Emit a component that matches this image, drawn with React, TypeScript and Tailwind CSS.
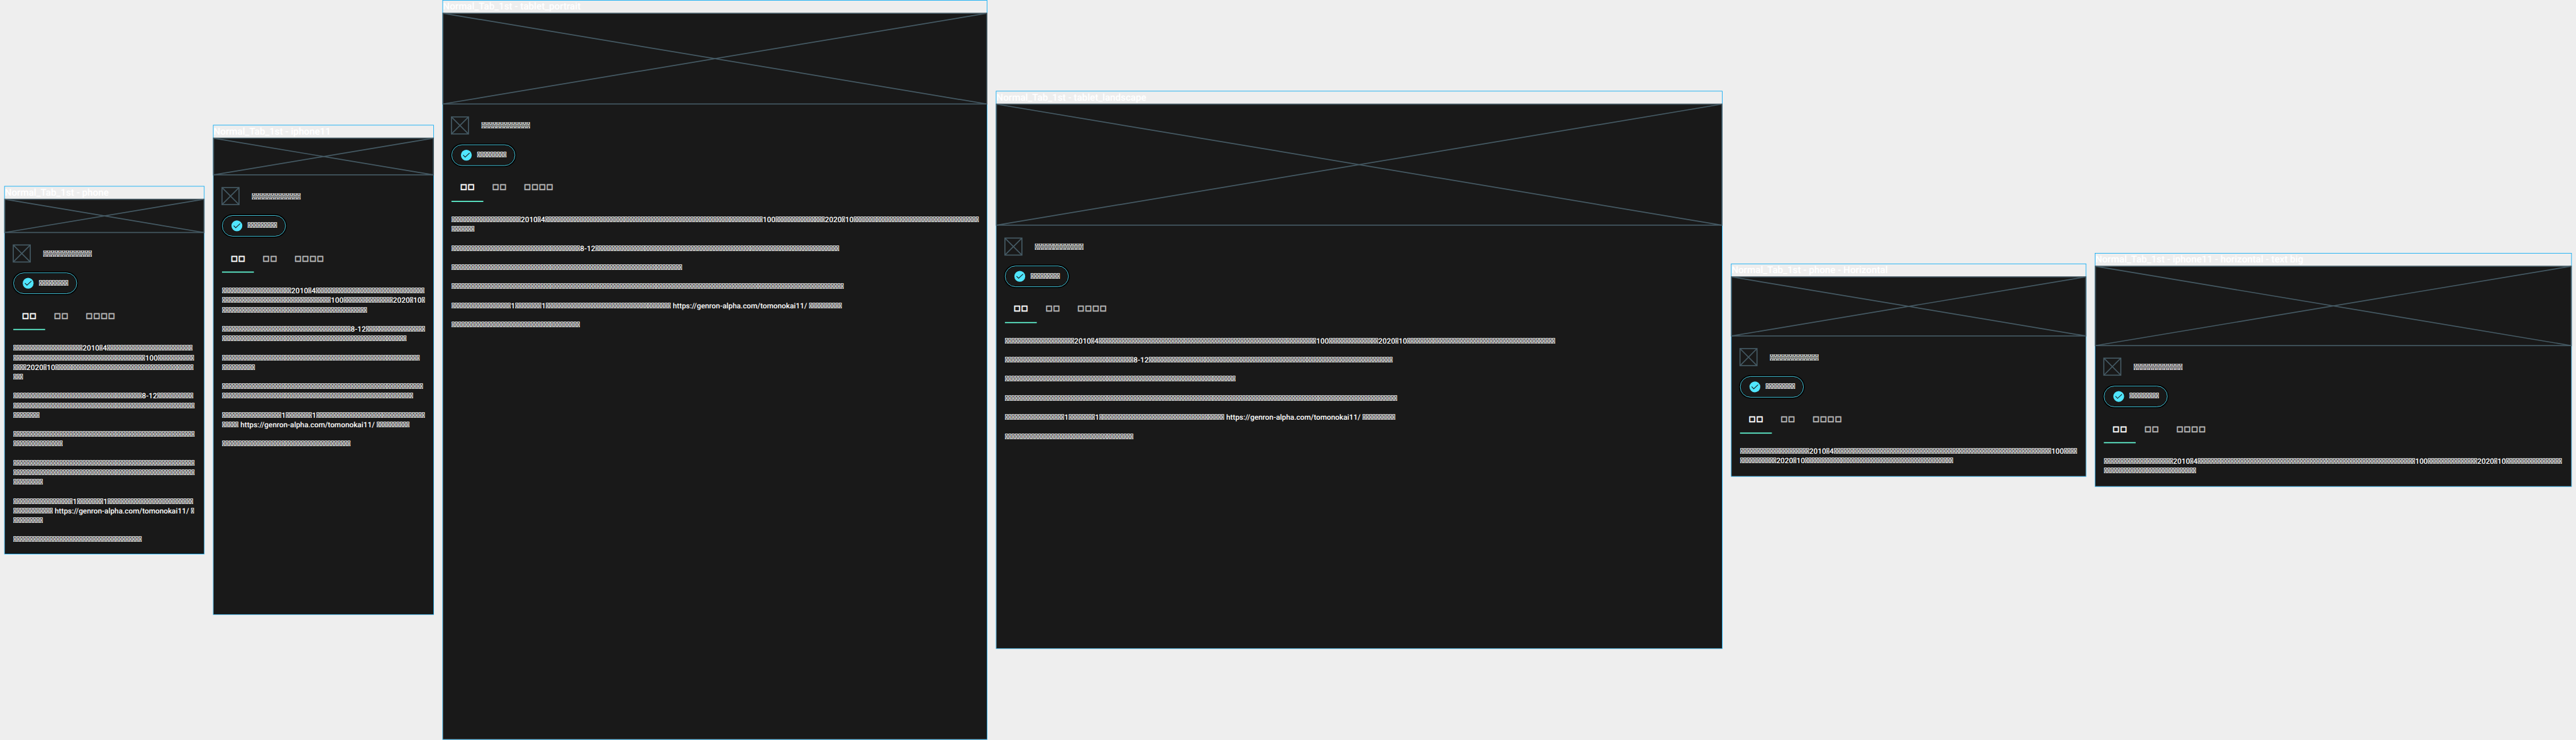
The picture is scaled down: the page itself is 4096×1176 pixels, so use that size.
type Piece = number | string;
type Line = Piece[];

interface Frame {
  name: string;
  size: string;
  banner: string;
  paragraphs: Line[][];
}

const URL_TEXT = " https://genron-alpha.com/tomonokai11/ ";

const introLine: Line = [21, "2010", 1, "4", 66, "100", 15, "2020", 1, "10"];

const wideTail: Line[][] = [
  [[39, "8-12", 74]],
  [[70]],
  [[119]],
  [[18, "1", 8, "1", 38, URL_TEXT, 10]],
  [[39]],
];

const frames: Frame[] = [
  {
    name: "Normal_Tab_1st - phone",
    size: "w-[375px] h-[667px]",
    banner: "h-[62.5px]",
    paragraphs: [
      [[21, "2010", 1, "4", 26], [40, "100", 11], [4, "2020", 1, "10", 42], [3]],
      [[39, "8-12", 11], [55], [8]],
      [[55], [15]],
      [[55], [55], [9]],
      [[18, "1", 8, "1", 26], [12, URL_TEXT, 1], [9]],
      [[39]],
    ],
  },
  {
    name: "Normal_Tab_1st - iphone11",
    size: "w-[414px] h-[896px]",
    banner: "h-[69px]",
    paragraphs: [
      [[21, "2010", 1, "4", 33], [33, "100", 15, "2020", 1, "10", 1], [44]],
      [[39, "8-12", 18], [56]],
      [[60], [10]],
      [[61], [58]],
      [[18, "1", 8, "1", 33], [5, URL_TEXT, 10]],
      [[39]],
    ],
  },
  {
    name: "Normal_Tab_1st - tablet_portrait",
    size: "w-[1024px] h-[1366px]",
    banner: "h-[170.67px]",
    paragraphs: [[[...introLine, 38], [7]], ...wideTail],
  },
  {
    name: "Normal_Tab_1st - tablet_landscape",
    size: "w-[1366px] h-[1024px]",
    banner: "h-[227.67px]",
    paragraphs: [[[...introLine, 45]], ...wideTail],
  },
  {
    name: "Normal_Tab_1st - phone - Horizontal",
    size: "w-[667px] h-[375px]",
    banner: "h-[111.17px]",
    paragraphs: [[[21, "2010", 1, "4", 66, "100", 4], [11, "2020", 1, "10", 45]]],
  },
  {
    name: "Normal_Tab_1st - iphone11 - horizontal - text big",
    size: "w-[896px] h-[414px]",
    banner: "h-[149.33px]",
    paragraphs: [[[...introLine, 17], [28]]],
  },
];

// Characters the typeface has no glyph for; they show as its placeholder box.
function Missing({ count }: { count: number }) {
  return <span className="[-webkit-text-stroke:0.25px_currentColor]">{"\uE000".repeat(count)}</span>;
}

function CrossedBox({ className }: { className: string }) {
  return (
    <svg className={`block shrink-0 overflow-visible text-[#455a64] ${className}`} stroke="currentColor" fill="none">
      <rect width="100%" height="100%" strokeWidth="2" />
      <line x1="0" y1="0" x2="100%" y2="100%" strokeWidth="2" />
      <line x1="0" y1="100%" x2="100%" y2="0" strokeWidth="2" />
    </svg>
  );
}

function CheckIcon() {
  return (
    <svg className="size-6 shrink-0" viewBox="0 0 24 24" fill="none">
      <circle cx="12" cy="12" r="10.2" fill="#50e6ff" />
      <path d="M5.9 11.6L9.8 15.6L18.1 7.9" stroke="#191919" strokeWidth="1.3" />
    </svg>
  );
}

function Tab({ label, active = false }: { label: string; active?: boolean }) {
  return (
    <div
      className={`h-12 border-b-2 px-4 pt-[9.6px] text-[15px] leading-6 ${
        active ? "border-[#64ffda] text-white" : "border-transparent text-[#b9b9b9]"
      }`}
    >
      <span className="flex font-['Inter',sans-serif] font-bold [-webkit-text-stroke:0.3px_currentColor]">
        {label.split("").map((glyph, i) => (
          <span key={i} className="flex w-[14px] justify-center">
            {glyph}
          </span>
        ))}
      </span>
    </div>
  );
}

function Device({ frame }: { frame: Frame }) {
  return (
    <section className="shrink-0 border border-[#03a9f4]">
      <h2 className="h-6 whitespace-nowrap text-[18px] leading-[23px] text-white">{frame.name}</h2>
      <div className={`bg-[#191919] text-white ${frame.size}`}>
        <CrossedBox className={`w-full ${frame.banner}`} />
        <div className="px-4 pt-6">
          <div className="flex items-center gap-6">
            <CrossedBox className="size-8" />
            <span className="pt-[2px] text-base leading-6">
              <Missing count={13} />
            </span>
          </div>
          <button className="mt-5 flex h-10 w-[120px] items-center gap-2 rounded-full border border-[#50e6ff] pl-[15px] text-sm leading-5 shadow-[0_0_0_2px_#000,inset_0_0_0_1px_#000]">
            <CheckIcon />
            <span className="pb-[2px]">
              <Missing count={9} />
            </span>
          </button>
          <div className="mt-5 flex">
            <Tab label="□□" active />
            <Tab label="□□" />
            <Tab label="□□□□" />
          </div>
          <div className="flex flex-col gap-[18px] whitespace-pre pt-[25.7px] text-sm leading-[18px]">
            {frame.paragraphs.map((lines, i) => (
              <p key={i}>
                {lines.map((line, j) => (
                  <span key={j} className="block">
                    {line.map((piece, k) => (typeof piece === "number" ? <Missing key={k} count={piece} /> : piece))}
                  </span>
                ))}
              </p>
            ))}
          </div>
        </div>
      </div>
    </section>
  );
}

export default function App() {
  return (
    <div className="h-[1176px] w-[4096px] overflow-hidden bg-[#eeeeee]">
      <main className="flex h-[1392px] w-[4850px] origin-top-left scale-[0.84454] items-center gap-4 px-2 font-['Roboto'] font-medium [text-rendering:geometricPrecision]">
        {frames.map((frame) => (
          <Device key={frame.name} frame={frame} />
        ))}
      </main>
    </div>
  );
}
